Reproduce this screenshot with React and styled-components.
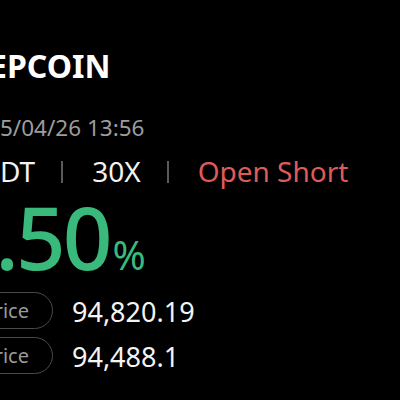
import styled, { createGlobalStyle } from "styled-components";

const GlobalStyle = createGlobalStyle`
  html, body {
    margin: 0;
    padding: 0;
    background: #000;
  }
  body {
    font-family: "Noto Sans", "Open Sans", sans-serif;
  }
`;

const Card = styled.div`
  width: 400px;
  height: 400px;
  overflow: hidden;
  background: #000;
  display: flex;
  flex-direction: column;
  padding-top: 48px;
  box-sizing: border-box;
`;

const Line = styled.div`
  display: flex;
  align-items: ${(p) => p.$align || "baseline"};
  white-space: nowrap;
  padding-left: ${(p) => p.$indent || 0}px;
  margin-top: ${(p) => p.$top || 0}px;
`;

/* the start of the text runs off the left edge of the card */
const Cut = styled.span`
  display: inline-flex;
  width: 0;
  flex-shrink: 0;
  justify-content: flex-end;
  white-space: nowrap;
`;

const Title = styled(Line)`
  font-size: 32px;
  font-weight: 700;
  line-height: 36px;
  color: #fff;
`;

const Time = styled(Line)`
  font-size: 22.5px;
  line-height: 26px;
  color: #9d9d9d;
`;

const Meta = styled(Line)`
  font-size: 28px;
  line-height: 32px;
  color: #f2f2f2;
  align-items: center;
`;

const Divider = styled.span`
  width: 2px;
  height: 22px;
  background: #5a5a5a;
  margin: 1px 29px 0 26px;
  flex-shrink: 0;
`;

const Side = styled.span`
  color: ${(p) => (p.$short ? "#de5b5b" : "#36b97c")};
`;

const Profit = styled(Line)`
  font-size: 87px;
  font-weight: 500;
  line-height: 90px;
  letter-spacing: -3px;
  color: #39b97c;
`;

const Percent = styled.span`
  font-size: 40px;
  line-height: 40px;
  font-weight: 400;
  letter-spacing: 0;
  margin-left: 3px;
`;

const PriceRow = styled.div`
  display: flex;
  align-items: center;
  height: 36px;
  margin-top: ${(p) => p.$top || 0}px;
`;

const PillSlot = styled.div`
  width: 53px;
  flex-shrink: 0;
  display: flex;
  justify-content: flex-end;
`;

const Pill = styled.div`
  flex-shrink: 0;
  height: 37px;
  box-sizing: border-box;
  border: 1px solid #4a4a4a;
  border-radius: 19px;
  padding: 0 23px 0 18px;
  font-size: 20px;
  line-height: 35px;
  color: #9a9a9a;
  white-space: nowrap;
`;

const Value = styled.div`
  margin-left: 19px;
  font-size: 27px;
  line-height: 36px;
  padding-top: 3px;
  color: #f4f4f4;
  white-space: nowrap;
`;

const prices = [
  { label: "Entry Price", value: "94,820.19" },
  { label: "Close Price", value: "94,488.1" },
];

export default function App() {
  return (
    <>
      <GlobalStyle />
      <Card>
        <Title $indent={7}>
          <Cut>DEE</Cut>
          PCOIN
        </Title>
        <Time $top={31}>
          <Cut>202</Cut>
          5/04/26 13:56
        </Time>
        <Meta $top={14}>
          <Cut>BTCUS</Cut>
          DT
          <Divider />
          30X
          <Divider />
          <Side $short>Open Short</Side>
        </Meta>
        <Profit $top={4} $indent={16}>
          <Cut>+10.</Cut>
          50
          <Percent>%</Percent>
        </Profit>
        {prices.map((p, i) => (
          <PriceRow key={p.label} $top={i === 0 ? 11 : 9}>
            <PillSlot>
              <Pill>{p.label}</Pill>
            </PillSlot>
            <Value>{p.value}</Value>
          </PriceRow>
        ))}
      </Card>
    </>
  );
}
